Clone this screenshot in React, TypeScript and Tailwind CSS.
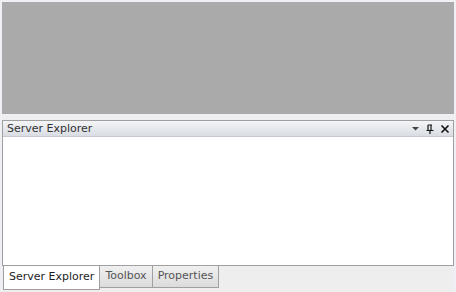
import React from 'react';

const tabs = ['Server Explorer', 'Toolbox', 'Properties'];

const App: React.FC = () => {
    return (
        <div
            className="w-[456px] h-[292px] bg-[#eef0f4] flex flex-col pl-[2px] pr-[2px] pt-[2px] text-[#1e1e1e]"
            style={{ fontFamily: 'Tahoma, "DejaVu Sans", Verdana, sans-serif' }}
        >
            <div className="h-[112px] bg-[#aaaaaa]" />
            <div className="flex-1 flex flex-col bg-[#eeeeee] pt-[4px] mt-[2px]">
                <div className="flex-1 flex flex-col border border-[#a0a0a0] bg-white">
                    <div className="h-[16px] flex items-center pl-[4px] pr-[3px] border-b border-[#c4c8cf] bg-gradient-to-b from-[#f4f5f7] to-[#d9dde3]">
                        <span className="text-[11px] leading-none text-[#333]">Server Explorer</span>
                        <div className="ml-auto flex items-center gap-[5px]">
                            <svg width="9" height="9" viewBox="0 0 9 9">
                                <path d="M1 3h7L4.5 6.5z" fill="#444" />
                            </svg>
                            <svg width="10" height="10" viewBox="0 0 10 10">
                                <path d="M3 1h4M3 1v5M6 1v5M1.5 6.5h7M5 6.5V10" stroke="#111" strokeWidth="1.2" fill="none" />
                            </svg>
                            <svg width="10" height="10" viewBox="0 0 10 10">
                                <path d="M1.5 1.5l7 7M8.5 1.5l-7 7" stroke="#111" strokeWidth="1.6" />
                            </svg>
                        </div>
                    </div>
                    <div className="flex-1" />
                </div>
                <div className="h-[26px] flex items-start pl-[1px]">
                    {tabs.map((t, i) => (
                        <div
                            key={t}
                            className={
                                i === 0
                                    ? 'h-[24px] px-[5px] flex items-center bg-white border-l border-r border-b border-[#a0a0a0] text-[11px] text-[#1e1e1e]'
                                    : 'h-[22px] px-[5px] flex items-center bg-gradient-to-b from-[#f0f0f0] to-[#dcdcdc] border-r border-b border-[#a0a0a0] text-[11px] text-[#555]'
                            }
                        >
                            {t}
                        </div>
                    ))}
                </div>
            </div>
        </div>
    );
};

export default App;
